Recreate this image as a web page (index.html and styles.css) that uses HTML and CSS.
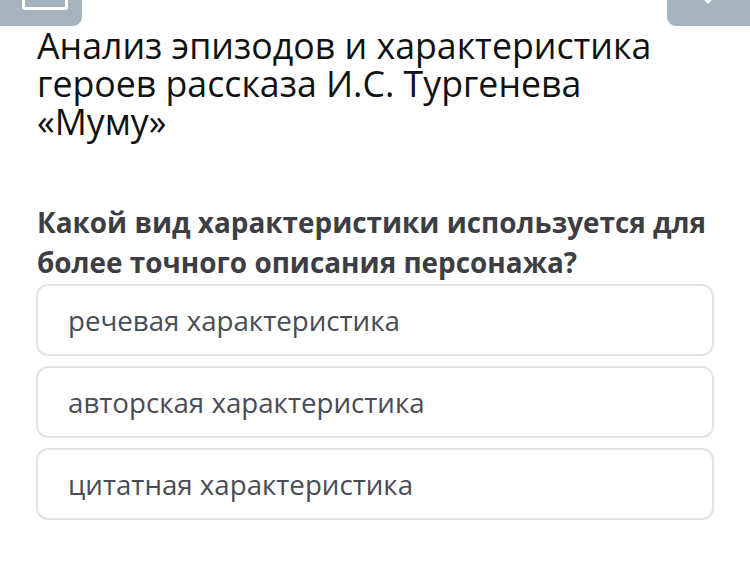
FILE: index.html
```html
<!DOCTYPE html>
<html lang="ru">
<head>
<meta charset="utf-8">
<link rel="stylesheet" href="styles.css">
</head>
<body>
<div class="topbar">
  <div class="tab tab-left"><span class="tab-mark"></span></div>
  <div class="tab tab-right">
    <svg class="tab-x" width="30" height="14" viewBox="0 0 30 14"><path d="M8 -6 L15 2 M22 -6 L15 2" stroke="#fff" stroke-width="3" fill="none" stroke-linecap="round"/></svg>
  </div>
</div>
<main class="content">
  <h1 class="title">Анализ эпизодов и характеристика героев рассказа И.С. Тургенева «Муму»</h1>
  <h2 class="question">Какой вид характеристики используется для более точного описания персонажа?</h2>
  <div class="options">
    <div class="option">речевая характеристика</div>
    <div class="option">авторская характеристика</div>
    <div class="option">цитатная характеристика</div>
  </div>
</main>
</body>
</html>
```
FILE: styles.css
```css
html, body { margin: 0; padding: 0; background: #fff; }
body { width: 750px; height: 568px; overflow: hidden; font-family: "Open Sans", "Noto Sans", sans-serif; }
.topbar { display: flex; justify-content: space-between; height: 26px; }
.tab { background: #a6b4bf; height: 26px; width: 82px; position: relative; overflow: hidden; }
.tab-left { border-bottom-right-radius: 9px; }
.tab-right { width: 83px; border-bottom-left-radius: 9px; }
.tab-mark { position: absolute; left: 22px; top: -6px; width: 40px; height: 10px; border: 3px solid #fff; border-radius: 3px; }
.tab-x { position: absolute; left: 26px; top: 0; }
.content { padding: 0 36px 0 37px; }
.title { margin: 0; padding-top: 0; font-weight: 400; font-size: 35.7px; line-height: 38px; color: #111; }
.question { margin: 62px 0 0; font-weight: 700; font-size: 27.9px; line-height: 40px; color: #3c3e44; }
.options { display: flex; flex-direction: column; gap: 10px; margin-top: 2px; margin-left: -1px; }
.option { border: 2px solid #e2e3e5; border-radius: 12px; box-sizing: border-box; height: 72px; display: flex; align-items: center; padding-left: 30px; font-size: 27.7px; color: #494c54; }
```
